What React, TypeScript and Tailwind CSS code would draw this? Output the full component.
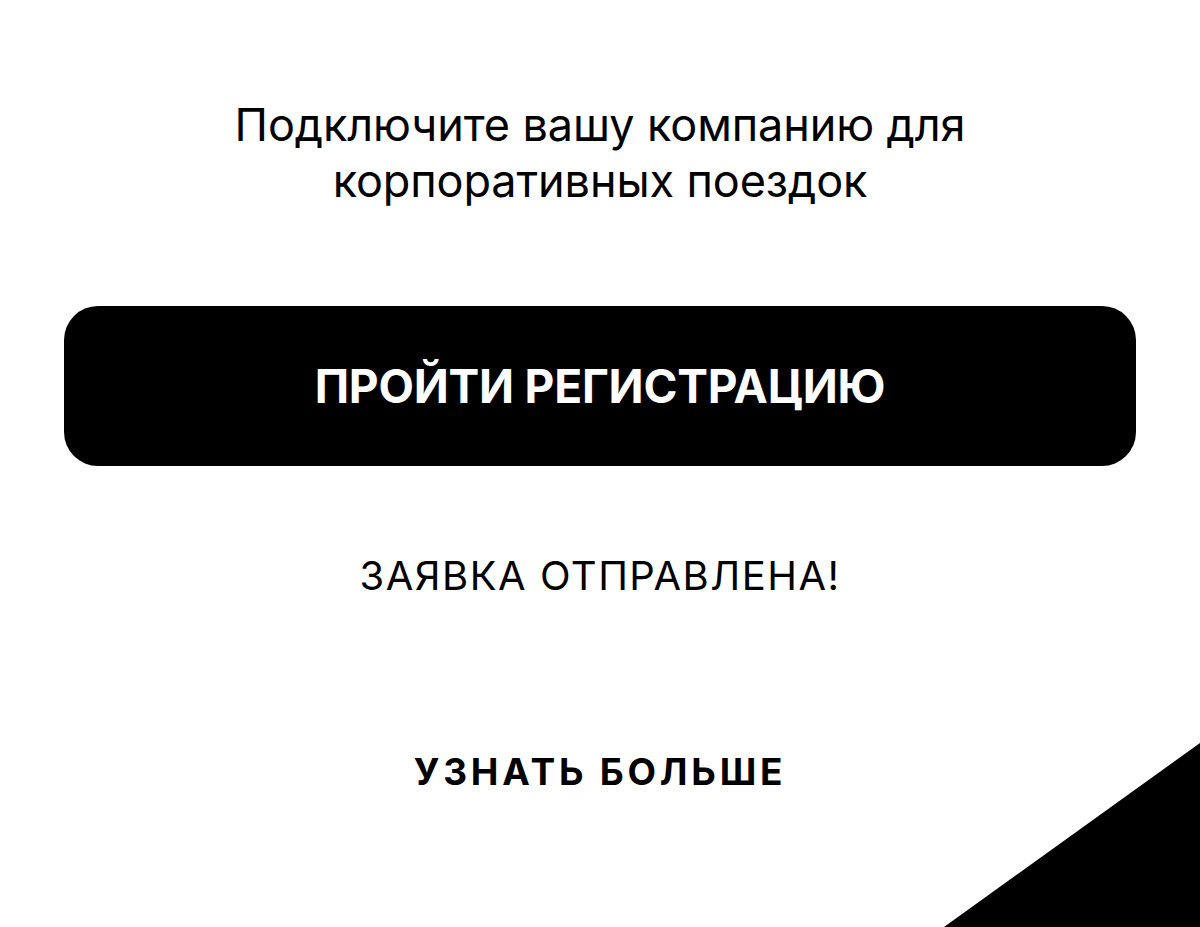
import React from "react";

export default function App() {
  return (
    <div
      className="relative h-[927px] w-full overflow-hidden bg-white flex flex-col items-center text-black"
      style={{ fontFamily: "Inter, 'Noto Sans', sans-serif" }}
    >
      <h1 className="mt-[97px] text-center text-[45px] leading-[56px] font-normal tracking-[-0.1px]">
        Подключите вашу компанию для
        <br />
        корпоративных поездок
      </h1>

      <button className="mt-[97px] h-[160px] w-[1072px] shrink-0 rounded-[34px] bg-black text-white text-[46px] font-bold tracking-[-0.2px]">
        ПРОЙТИ РЕГИСТРАЦИЮ
      </button>

      <p className="mt-[86px] text-[40px] leading-[48px] font-normal tracking-[1.5px]">
        ЗАЯВКА ОТПРАВЛЕНА!
      </p>

      <a href="#" className="mt-[149px] text-[37px] leading-[46px] font-bold tracking-[3.8px]">
        УЗНАТЬ БОЛЬШЕ
      </a>

      {/* corner wedge */}
      <svg
        className="absolute right-0 bottom-0"
        width="256"
        height="184"
        viewBox="0 0 256 184"
      >
        <polygon points="256,0 256,184 0,184" fill="#000" />
      </svg>
    </div>
  );
}
